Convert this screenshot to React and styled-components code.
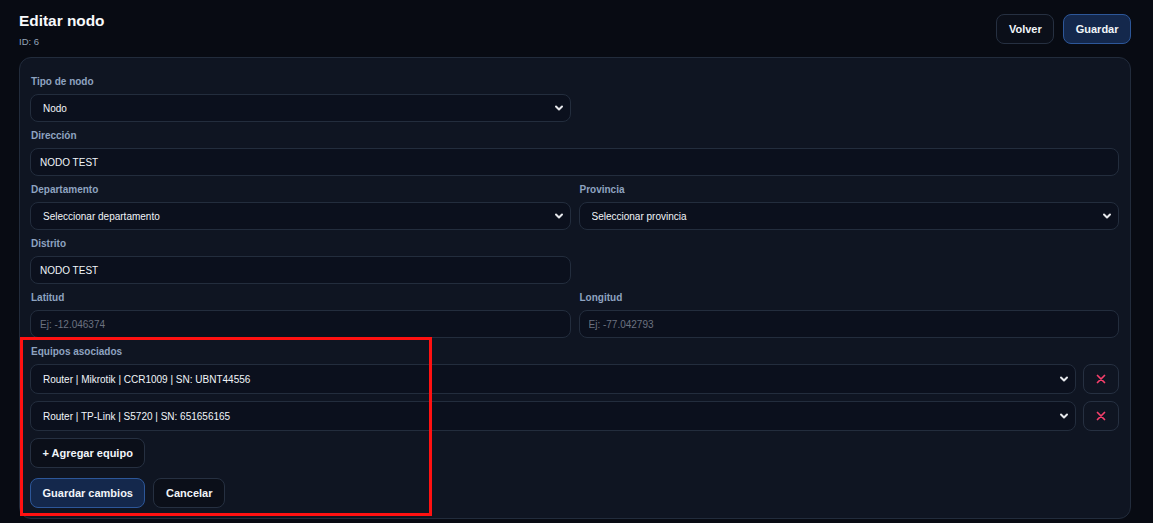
import React, { useState } from 'react'
import styled, { createGlobalStyle, css } from 'styled-components'

const GlobalStyle = createGlobalStyle`
  * { box-sizing: border-box; }
  html, body {
    margin: 0;
    background: #080b13;
    font-family: "Liberation Sans", Arial, sans-serif;
    color: #e5e7eb;
  }
`

const chevron =
  "url(\"data:image/svg+xml;utf8,<svg xmlns='http://www.w3.org/2000/svg' width='12' height='12' viewBox='0 0 24 24' fill='none' stroke='%23e5e7eb' stroke-width='4' stroke-linecap='round' stroke-linejoin='round'><polyline points='6 9 12 15 18 9'/></svg>\")"

const Page = styled.div`
  padding: 11px 22px 0 19px;
  min-height: 523px;
`

const Header = styled.header`
  display: flex;
  justify-content: space-between;
  align-items: flex-start;
  margin-bottom: 8px;
`

const Title = styled.h1`
  margin: 0;
  font-size: 15.4px;
  line-height: 20px;
  font-weight: 700;
  color: #f8fafc;
`

const SubTitle = styled.div`
  margin-top: 4px;
  font-size: 9.5px;
  line-height: 14px;
  color: #94a3b8;
`

const Actions = styled.div`
  display: flex;
  gap: 9px;
  margin-top: 3px;
`

const Button = styled.button`
  height: 30px;
  padding: 0 11.5px;
  border-radius: 8px;
  font-family: inherit;
  font-size: 11px;
  font-weight: 700;
  color: #f1f5f9;
  cursor: pointer;
  border: 1px solid #263041;
  background: #0b0f19;
  ${(p) =>
    p.$primary &&
    css`
      background: #14284c;
      border-color: #2d5799;
    `}
`

const Card = styled.section`
  background: #0f1522;
  border: 1px solid #222c3c;
  border-radius: 12px;
  padding: 17px 11px 10px 10px;
  display: flex;
  flex-direction: column;
  gap: 7px;
`

const Row = styled.div`
  display: grid;
  grid-template-columns: 1fr 1fr;
  gap: 8px;
`

const Field = styled.div`
  display: flex;
  flex-direction: column;
`

const Label = styled.label`
  font-size: 10px;
  line-height: 14px;
  font-weight: 700;
  color: #8ea3c0;
  padding-left: 1px;
  margin-bottom: ${(p) => (p.$tight ? '-2px' : '5px')};
`

const fieldBase = css`
  height: 28px;
  width: 100%;
  border: 1px solid #232d3d;
  border-radius: 8px;
  background-color: #0b101d;
  color: #f1f5f9;
  font-family: inherit;
  font-size: 10px;
  outline: none;
`

const Input = styled.input`
  ${fieldBase}
  padding: 0 9px;
  &::placeholder { color: #6b7280; }
`

const Select = styled.select`
  ${fieldBase}
  appearance: none;
  padding: 0 26px 0 12px;
  background-image: ${chevron};
  background-repeat: no-repeat;
  background-position: right 5px center;
  height: ${(p) => (p.$tall ? '30px' : '28px')};
`

const Equipos = styled.div`
  position: relative;
  display: flex;
  flex-direction: column;
  gap: 7px;
`

const Highlight = styled.div`
  position: absolute;
  top: -8px;
  left: -10px;
  width: 412px;
  bottom: -8px;
  border: 3px solid #ff1111;
  pointer-events: none;
`

const EquipoRow = styled.div`
  display: grid;
  grid-template-columns: 1fr 36px;
  gap: 7px;
`

const RemoveButton = styled.button`
  height: 30px;
  border: 1px solid #263041;
  border-radius: 8px;
  background: #0f1522;
  display: flex;
  align-items: center;
  justify-content: center;
  cursor: pointer;
  padding: 0;
`

const ButtonRow = styled.div`
  display: flex;
  gap: 8px;
  margin-top: 3px;
`

const Empty = styled.div``

const equiposIniciales = [
  'Router | Mikrotik | CCR1009 | SN: UBNT44556',
  'Router | TP-Link | S5720 | SN: 651656165',
]

const XIcon = () => (
  <svg width="12" height="12" viewBox="0 0 24 24" fill="none" stroke="#f43f6b" strokeWidth="3.5" strokeLinecap="round">
    <path d="M5 5l14 14M19 5L5 19" />
  </svg>
)

export default function App() {
  const [equipos, setEquipos] = useState(equiposIniciales)

  return (
    <Page>
      <GlobalStyle />
      <Header>
        <div>
          <Title>Editar nodo</Title>
          <SubTitle>ID: 6</SubTitle>
        </div>
        <Actions>
          <Button>Volver</Button>
          <Button $primary>Guardar</Button>
        </Actions>
      </Header>

      <Card>
        <Row>
          <Field>
            <Label>Tipo de nodo</Label>
            <Select defaultValue="nodo">
              <option value="nodo">Nodo</option>
            </Select>
          </Field>
          <Empty />
        </Row>

        <Field>
          <Label>Dirección</Label>
          <Input defaultValue="NODO TEST" />
        </Field>

        <Row>
          <Field>
            <Label>Departamento</Label>
            <Select>
              <option>Seleccionar departamento</option>
            </Select>
          </Field>
          <Field>
            <Label>Provincia</Label>
            <Select>
              <option>Seleccionar provincia</option>
            </Select>
          </Field>
        </Row>

        <Row>
          <Field>
            <Label>Distrito</Label>
            <Input defaultValue="NODO TEST" />
          </Field>
          <Empty />
        </Row>

        <Row>
          <Field>
            <Label>Latitud</Label>
            <Input placeholder="Ej: -12.046374" />
          </Field>
          <Field>
            <Label>Longitud</Label>
            <Input placeholder="Ej: -77.042793" />
          </Field>
        </Row>

        <Equipos>
          <Label $tight>Equipos asociados</Label>
          {equipos.map((eq, i) => (
            <EquipoRow key={i}>
              <Select $tall defaultValue={eq}>
                <option>{eq}</option>
              </Select>
              <RemoveButton onClick={() => setEquipos(equipos.filter((_, j) => j !== i))}>
                <XIcon />
              </RemoveButton>
            </EquipoRow>
          ))}
          <div>
            <Button onClick={() => setEquipos([...equipos, 'Seleccionar equipo'])}>+ Agregar equipo</Button>
          </div>
          <ButtonRow>
            <Button $primary>Guardar cambios</Button>
            <Button>Cancelar</Button>
          </ButtonRow>
          <Highlight />
        </Equipos>
      </Card>
    </Page>
  )
}
